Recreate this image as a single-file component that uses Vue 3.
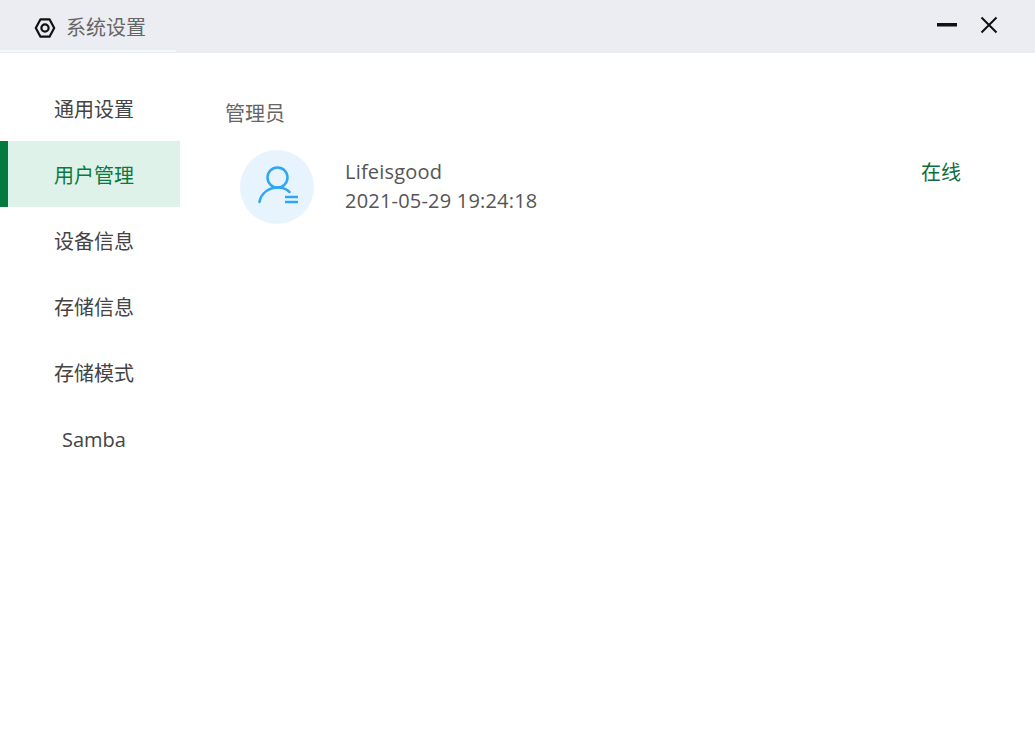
<template>
  <div class="window">
    <header class="titlebar">
      <div class="title">
        <svg class="logo" width="22" height="22" viewBox="0 0 22 22" fill="none" stroke="#111" stroke-width="2.200">
          <path d="M6.500 2.300h9l4.700 8.700-4.700 8.700h-9L1.800 11z" stroke-linejoin="round" />
          <circle cx="11" cy="11" r="3.600" />
        </svg>
        <span class="title-text">系统设置</span>
      </div>
      <div class="controls">
        <svg width="20" height="4" viewBox="0 0 20 4"><rect width="20" height="3.500" fill="#111" /></svg>
        <svg width="18" height="18" viewBox="0 0 18 18" stroke="#111" stroke-width="2" fill="none">
          <path d="M1.500 1.500l15 15M16.500 1.500l-15 15" />
        </svg>
      </div>
    </header>

    <div class="body">
      <nav class="side">
        <div
          v-for="item in menu"
          :key="item"
          class="side-item"
          :class="{ active: item === current }"
        >{{ item }}</div>
      </nav>

      <main class="content">
        <div class="section-title">管理员</div>
        <div class="user-row">
          <div class="avatar">
            <svg width="74" height="74" viewBox="0 0 74 74" fill="none" stroke="#2da6f5" stroke-width="2.500" stroke-linecap="round">
              <circle cx="37.500" cy="27.500" r="10" />
              <path d="M19.500 52C21 43 29 37.500 38 37.500c4.500 0 8.500 1.500 11.500 4.500" />
              <path d="M45 47h13M45 52h13" stroke-linecap="butt" />
            </svg>
          </div>
          <div class="user-info">
            <div>{{ user.name }}</div>
            <div>{{ user.time }}</div>
          </div>
          <div class="status">在线</div>
        </div>
      </main>
    </div>
  </div>
</template>

<script setup>
import { ref } from 'vue'

const menu = ['通用设置', '用户管理', '设备信息', '存储信息', '存储模式', 'Samba']
const current = ref('用户管理')
const user = { name: 'Lifeisgood', time: '2021-05-29 19:24:18' }
</script>

<style>
html, body {
  margin: 0;
  background: #fff;
}
</style>

<style scoped>
.window {
  width: 1035px;
  height: 750px;
  overflow: hidden;
  background: #fff;
  font-family: "Open Sans", "Noto Sans CJK SC", sans-serif;
  color: #555;
}

.titlebar {
  position: relative;
  height: 53px;
  background: #ecedf2;
  display: flex;
  align-items: center;
  justify-content: space-between;
  padding: 2px 37px 0 34px;
  box-sizing: border-box;
}

.titlebar::after {
  content: "";
  position: absolute;
  left: 0;
  bottom: 1px;
  width: 176px;
  height: 2px;
  background: #f3f7fb;
}

.title {
  display: flex;
  align-items: center;
  gap: 10px;
  font-size: 20px;
  color: #666;
}

.title-text {
  margin-top: -2px;
}

.controls {
  display: flex;
  align-items: center;
  gap: 23px;
  margin-top: -6px;
}

.body {
  display: flex;
  padding-top: 22px;
}

.side {
  width: 180px;
  flex-shrink: 0;
}

.side-item {
  height: 66px;
  line-height: 69px;
  text-align: center;
  font-size: 20px;
  color: #444;
  box-sizing: border-box;
  border-left: 8px solid transparent;
}

.side-item.active {
  background: #dff2ea;
  color: #0a7a42;
  border-left-color: #057a3e;
}

.content {
  flex: 1;
  padding: 26px 74px 0 45px;
}

.section-title {
  font-size: 20px;
  line-height: 26px;
  color: #666;
}

.user-row {
  display: flex;
  align-items: center;
  margin-top: 23px;
  padding-left: 15px;
}

.avatar {
  width: 74px;
  height: 74px;
  border-radius: 50%;
  background: #e8f4fd;
}

.user-info {
  margin-left: 31px;
  margin-top: -2px;
  flex: 1;
  font-size: 20px;
  line-height: 29px;
  letter-spacing: 0.2px;
  color: #555;
}

.status {
  align-self: flex-start;
  margin-top: 7px;
  font-size: 20px;
  color: #0d6b3c;
}
</style>
